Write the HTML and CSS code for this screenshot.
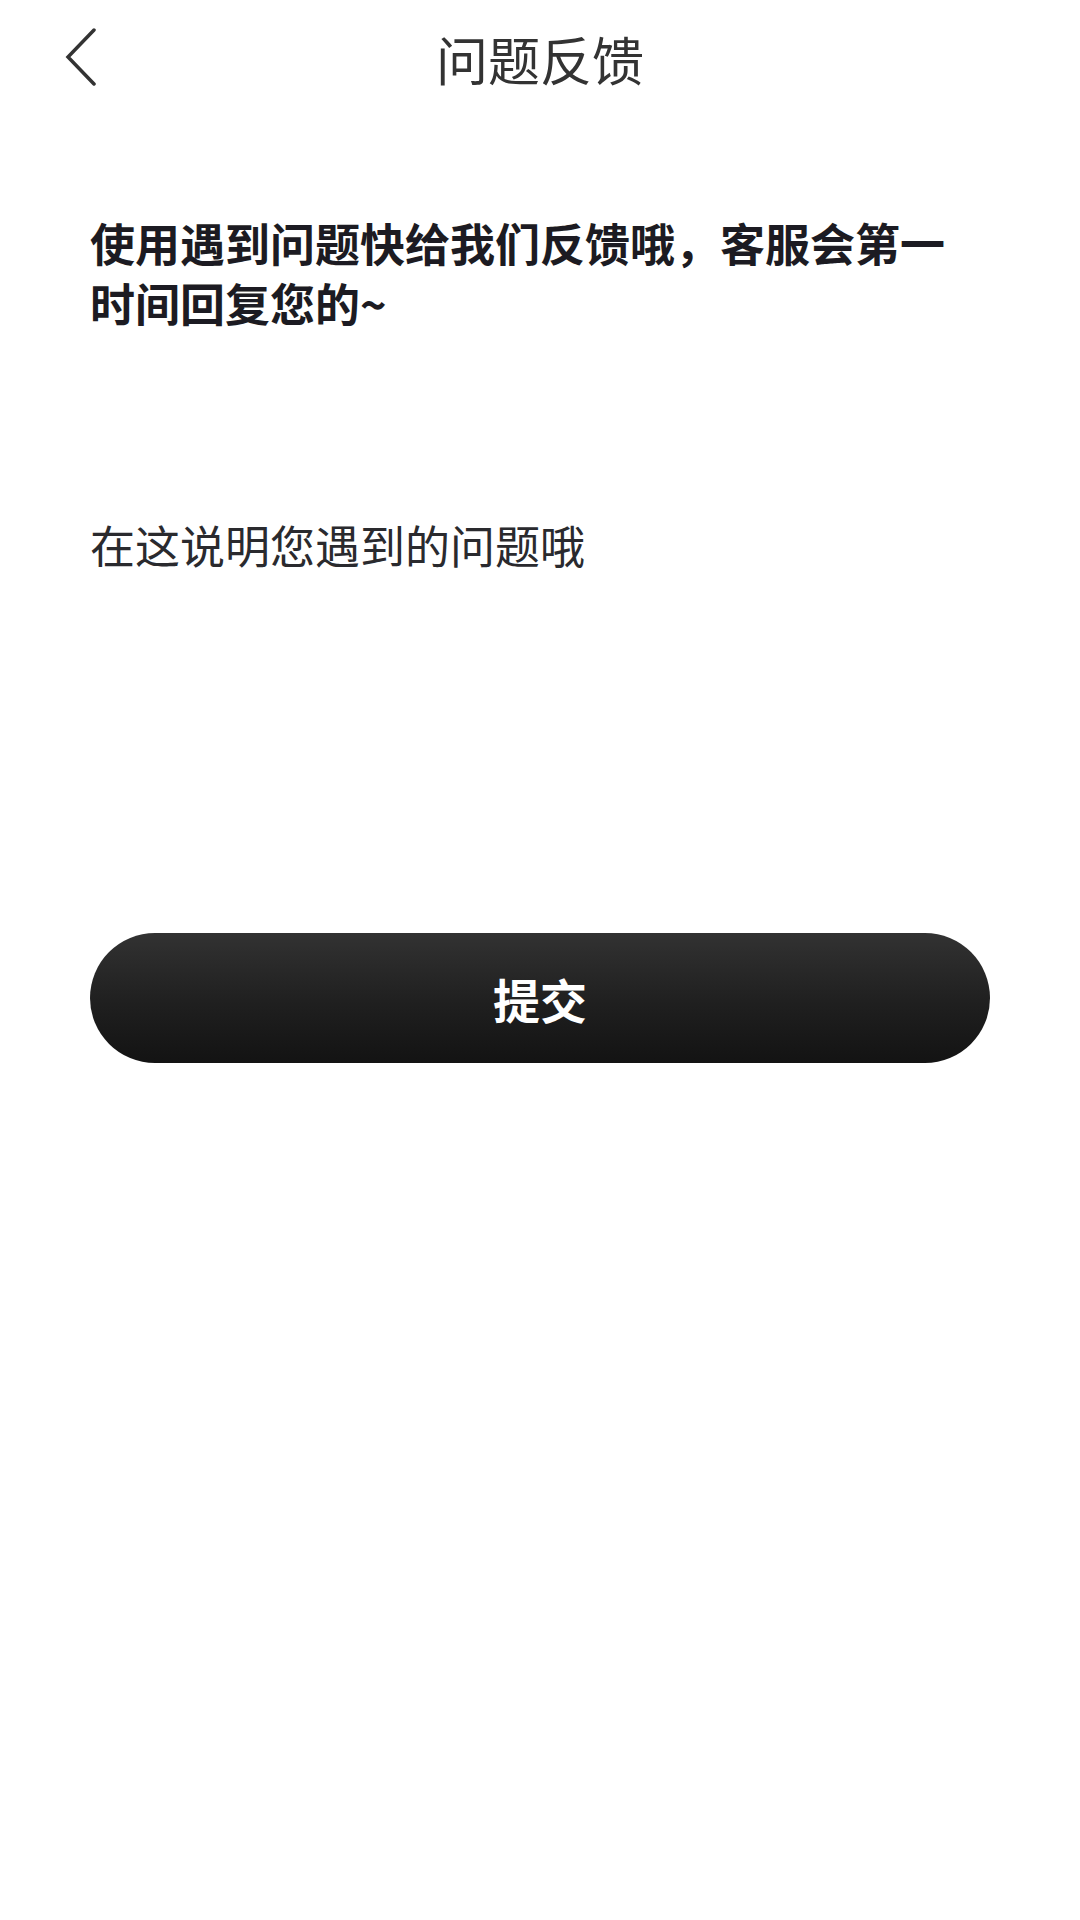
FILE: index.html
```html
<!DOCTYPE html>
<html lang="zh-CN">
<head>
<meta charset="utf-8">
<title>问题反馈</title>
<link rel="stylesheet" href="styles.css">
</head>
<body>
<div class="page">
  <header class="nav">
    <div class="nav-left">
      <svg class="back" width="32" height="58" viewBox="0 0 32 58" aria-hidden="true">
        <path d="M29 2 L3 29 L29 56" fill="none" stroke="#333" stroke-width="3.5" stroke-linecap="round" stroke-linejoin="miter"/>
      </svg>
    </div>
    <h1 class="nav-title">问题反馈</h1>
    <div class="nav-right"></div>
  </header>
  <main class="content">
    <p class="intro">使用遇到问题快给我们反馈哦，客服会第一时间回复您的~</p>
    <textarea class="feedback" placeholder="在这说明您遇到的问题哦"></textarea>
    <button class="submit" type="button">提交</button>
  </main>
</div>
</body>
</html>
```

FILE: styles.css
```css
html, body {
  margin: 0;
  padding: 0;
  background: #ffffff;
}

body {
  font-family: "Noto Sans CJK SC", "Noto Sans", sans-serif;
  color: #1c1b22;
}

.page {
  width: 1080px;
  min-height: 1920px;
  background: #ffffff;
}

.nav {
  height: 118px;
  display: grid;
  grid-template-columns: 1fr auto 1fr;
  align-items: center;
}

.nav-left {
  display: flex;
  align-items: center;
  padding-left: 65px;
  padding-bottom: 4px;
}

.back {
  display: block;
}

.nav-title {
  margin: 0;
  font-size: 52px;
  font-weight: 400;
  line-height: 60px;
  color: #333333;
  text-align: center;
}

.content {
  display: flex;
  flex-direction: column;
  padding: 0 90px;
}

.intro {
  margin: 95px 20px 0 0;
  font-size: 45px;
  line-height: 60px;
  font-weight: 700;
  color: #1c1b22;
}

.feedback {
  margin-top: 182px;
  height: 360px;
  padding: 0;
  border: none;
  outline: none;
  resize: none;
  background: transparent;
  font-family: "Noto Sans CJK SC", "Noto Sans", sans-serif;
  font-size: 45px;
  line-height: 60px;
  color: #222222;
}

.feedback::placeholder {
  color: #2a2a2e;
  opacity: 1;
}

.submit {
  margin-top: 58px;
  height: 130px;
  width: 100%;
  border: none;
  border-radius: 65px;
  background: linear-gradient(180deg, #323232 0%, #1f1f1f 55%, #131313 100%);
  color: #ffffff;
  font-family: "Noto Sans CJK SC", "Noto Sans", sans-serif;
  font-size: 47px;
  font-weight: 700;
  line-height: 1;
  padding: 0;
  cursor: pointer;
}
```
